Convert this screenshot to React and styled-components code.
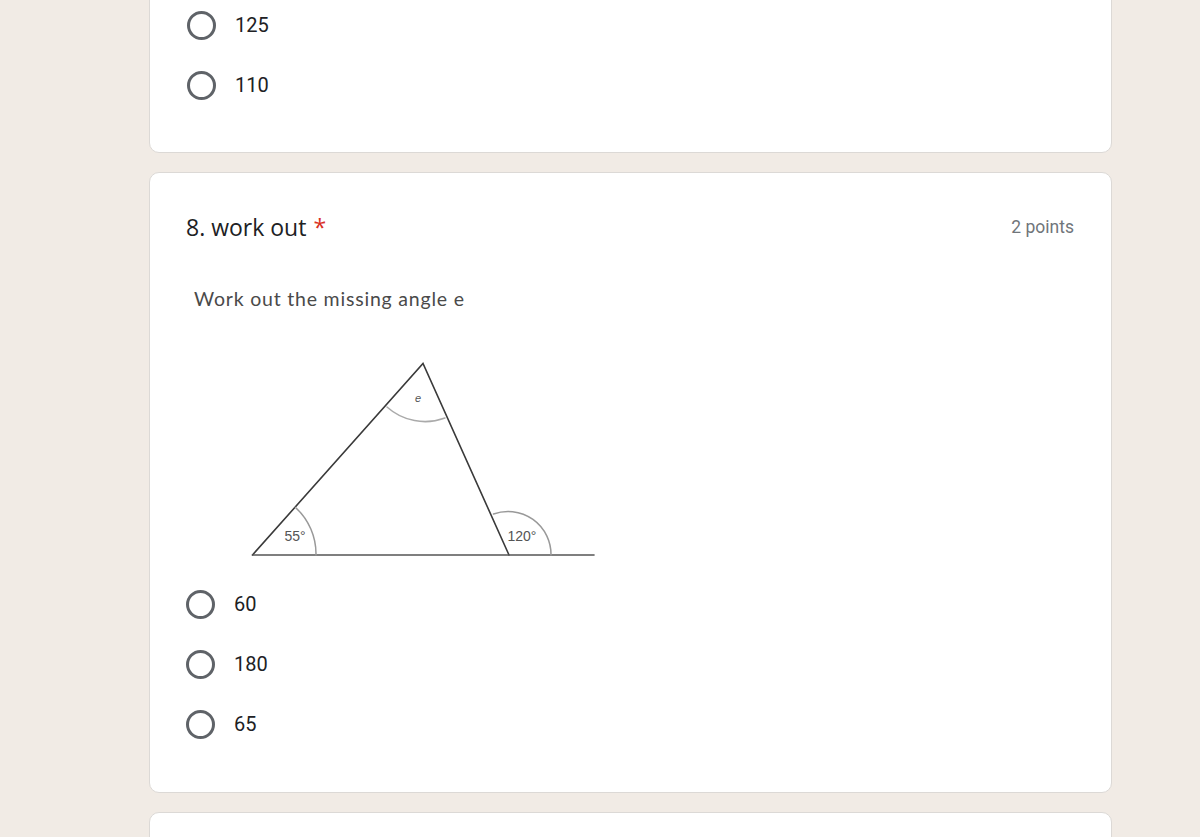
import React from "react";
import styled, { createGlobalStyle } from "styled-components";

const Global = createGlobalStyle`
  html, body { margin: 0; padding: 0; background: #f1ebe5; }
  body { font-family: Roboto, "Liberation Sans", sans-serif; overflow: hidden; }
`;

const Page = styled.div`
  display: flex;
  flex-direction: column;
  gap: 19px;
  padding-left: 149px;
  margin-top: -40px;
  height: 900px;
`;

const Card = styled.section`
  width: 963px;
  background: #fff;
  border: 1px solid #dcd9d6;
  border-radius: 10px;
  box-sizing: border-box;
  padding: ${(p) => p.$pad || "0 37px"};
  display: flex;
  flex-direction: column;
  flex-shrink: 0;
  min-height: ${(p) => p.$minH || "auto"};
`;

const Header = styled.div`
  display: flex;
  align-items: center;
  justify-content: space-between;
  height: 32px;
`;

const Title = styled.h2`
  margin: 0;
  font-family: "Open Sans", Roboto, sans-serif;
  font-weight: 400;
  font-size: 23px;
  color: #202124;
  letter-spacing: 0;
`;

const Required = styled.span`
  color: #d93025;
  margin-left: 7px;
`;

const Points = styled.span`
  font-family: Roboto, sans-serif;
  font-size: 17.5px;
  color: #70757a;
  margin-right: 1px;
`;

const Figure = styled.div`
  margin-top: 44px;
  margin-left: 8px;
  display: flex;
  flex-direction: column;
`;

const Caption = styled.div`
  font-family: Lato, "DejaVu Sans", sans-serif;
  font-size: 19.5px;
  letter-spacing: 0.8px;
  color: #4a4a4a;
  height: 24px;
  line-height: 24px;
`;

const Diagram = styled.svg`
  display: block;
  margin-top: 41px;
  margin-left: 46px;
`;

const Options = styled.div`
  display: flex;
  flex-direction: column;
  margin-top: ${(p) => p.$mt || 0}px;
`;

const Option = styled.label`
  display: flex;
  align-items: center;
  height: 60px;
  gap: 19px;
  font-size: 20px;
  color: #202124;
`;

const Radio = styled.span`
  width: 29px;
  height: 29px;
  box-sizing: border-box;
  border: 3px solid #5f6368;
  border-radius: 50%;
  flex-shrink: 0;
`;

const OptionList = ({ items, mt }) => (
  <Options $mt={mt}>
    {items.map((t) => (
      <Option key={t}>
        <Radio />
        <span>{t}</span>
      </Option>
    ))}
  </Options>
);

const Triangle = () => (
  <Diagram width="360" height="210" viewBox="0 0 360 210">
    <g fill="none" strokeLinecap="round">
      <path d="M12.5 203 L183 11.5 L269 203" stroke="#3a3a3a" strokeWidth="1.6" />
      <path d="M12.5 203 L354 203" stroke="#555" strokeWidth="1.6" />
      <path d="M147 55 A57 57 0 0 0 205 66" stroke="#aaa" strokeWidth="1.5" />
      <path d="M76 203 A63 63 0 0 0 55.5 155.5" stroke="#999" strokeWidth="1.5" />
      <path d="M311 203 A43 43 0 0 0 253.5 162" stroke="#999" strokeWidth="1.5" />
    </g>
    <g fontFamily="'Liberation Sans', Arial, sans-serif" fill="#555">
      <text x="178" y="50" fontSize="11" fontStyle="italic" textAnchor="middle">e</text>
      <text x="55" y="189" fontSize="14" textAnchor="middle">55°</text>
      <text x="282" y="189" fontSize="14" textAnchor="middle">120°</text>
    </g>
  </Diagram>
);

export default function App() {
  return (
    <>
      <Global />
      <Page>
        <Card $pad="34px 37px 37px">
          <OptionList items={["125", "110"]} />
        </Card>
        <Card $pad="38px 36px 38px">
          <Header>
            <Title>
              8. work out<Required>*</Required>
            </Title>
            <Points>2 points</Points>
          </Header>
          <Figure>
            <Caption>Work out the missing angle e</Caption>
            <Triangle />
          </Figure>
          <OptionList mt={12} items={["60", "180", "65"]} />
        </Card>
        <Card $minH="100px" />
      </Page>
    </>
  );
}
